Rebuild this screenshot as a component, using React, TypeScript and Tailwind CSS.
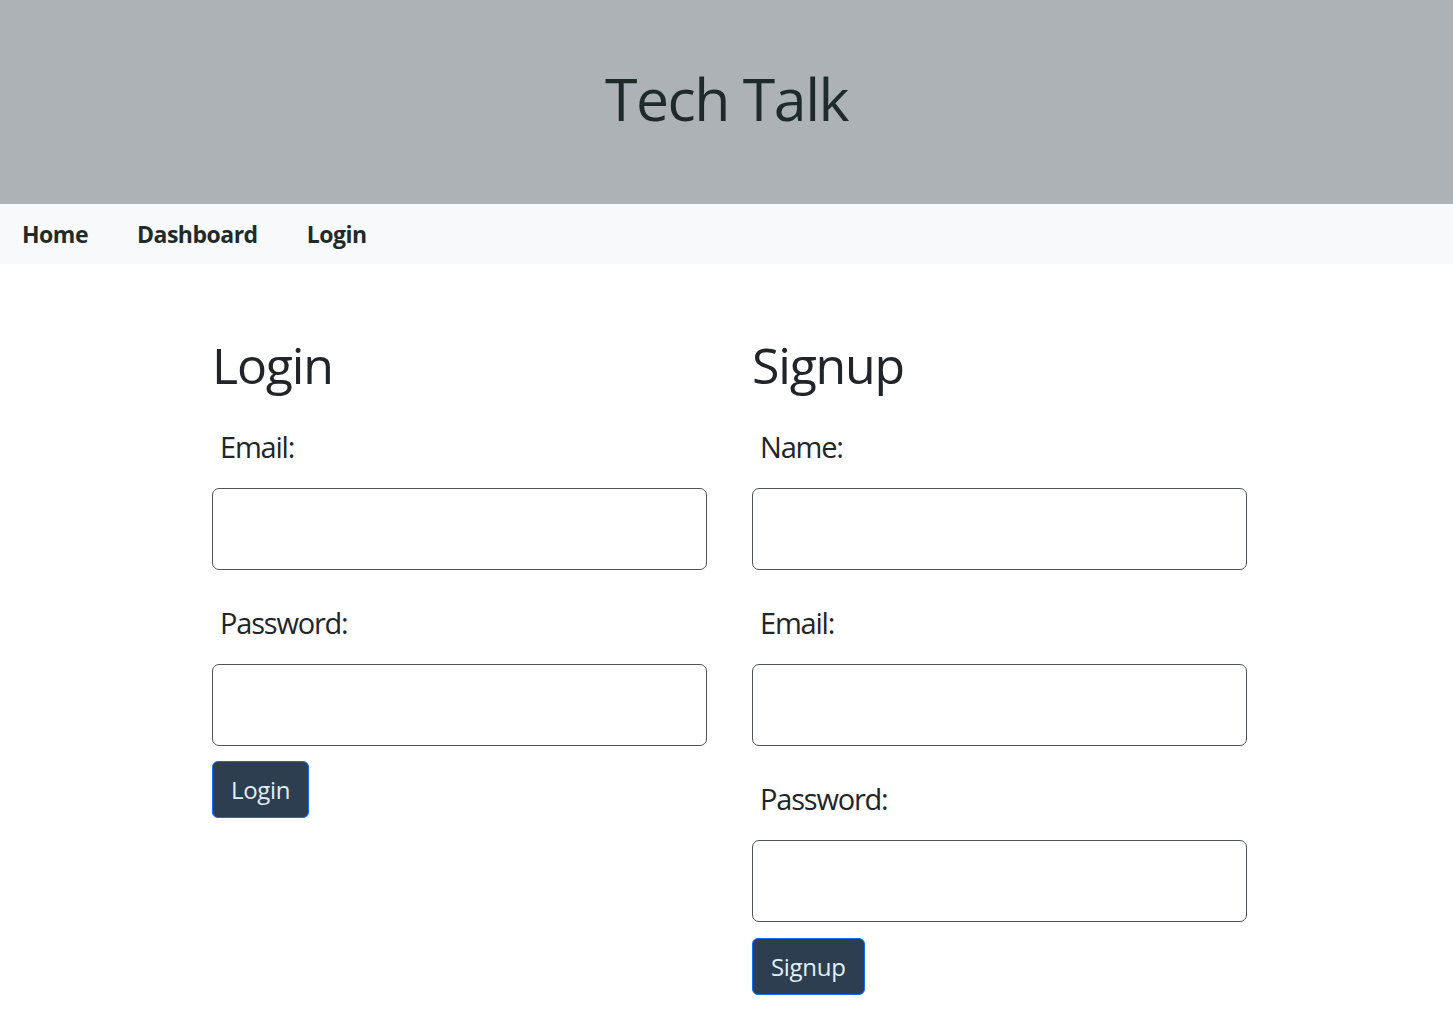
import { useState } from 'react'

function Field({ label, type = 'text' }: { label: string; type?: string }) {
  const [value, setValue] = useState('')
  return (
    <div className="flex flex-col">
      <label className="pl-2 text-[29px] leading-[45px] tracking-[-1.2px] text-[#212529]">{label}</label>
      <input
        type={type}
        value={value}
        onChange={(e) => setValue(e.target.value)}
        className="mt-[19px] h-[82px] w-full rounded-[7px] border border-[#505356] bg-white px-4 text-[24px] focus:outline-none"
      />
    </div>
  )
}

function SubmitButton({ children }: { children: string }) {
  return (
    <button className="h-[57px] self-start rounded-[6px] border border-[#0d6efd] bg-[#2c3e50] px-[18px] text-[24px] tracking-[-0.3px] text-[#e0eff9]">
      {children}
    </button>
  )
}

export default function App() {
  return (
    <div className="min-h-screen bg-white font-['Open_Sans','Noto_Sans',sans-serif] text-[#212529]">
      <header className="flex h-[204px] items-center justify-center bg-[#adb2b6] pb-[8px]">
        <h1 className="text-[59px] leading-none font-medium tracking-[-1.5px] text-[#1f2b2b]">Tech Talk</h1>
      </header>

      <nav className="flex h-[60px] items-center gap-[49px] bg-[#f8f9fa] pl-[22px]">
        <a href="#" className="text-[23px] font-bold tracking-[-0.5px] text-[#1f2b2b]">Home</a>
        <a href="#" className="text-[23px] font-bold tracking-[-0.5px] text-[#1f2b2b]">Dashboard</a>
        <a href="#" className="text-[23px] font-bold tracking-[-0.5px] text-[#1f2b2b]">Login</a>
      </nav>

      <main className="flex gap-[45px] pl-[212px] pt-[71px] pb-10">
        {/* 로그인 */}
        <section className="flex w-[495px] flex-col">
          <h2 className="text-[50px] leading-[60px] font-medium tracking-[-1.2px]">Login</h2>
          <div className="mt-[29px] flex flex-col gap-[30px]">
            <Field label="Email:" type="email" />
            <Field label="Password:" type="password" />
          </div>
          <div className="mt-[15px] flex">
            <SubmitButton>Login</SubmitButton>
          </div>
        </section>

        {/* 회원가입 */}
        <section className="flex w-[495px] flex-col">
          <h2 className="text-[50px] leading-[60px] font-medium tracking-[-1.2px]">Signup</h2>
          <div className="mt-[29px] flex flex-col gap-[30px]">
            <Field label="Name:" />
            <Field label="Email:" type="email" />
            <Field label="Password:" type="password" />
          </div>
          <div className="mt-[16px] flex">
            <SubmitButton>Signup</SubmitButton>
          </div>
        </section>
      </main>
    </div>
  )
}
